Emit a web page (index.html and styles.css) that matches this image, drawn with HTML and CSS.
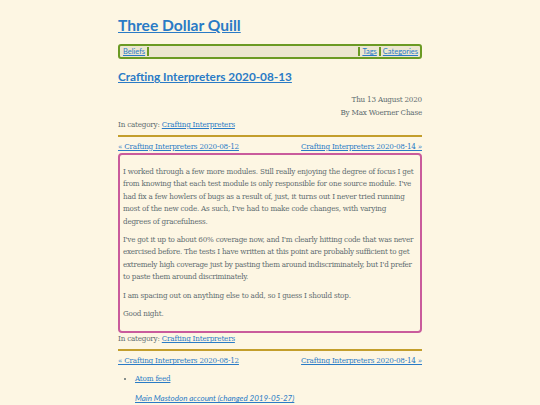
FILE: index.html
```html
<!DOCTYPE html>
<html lang="en">
<head>
<meta charset="utf-8">
<title>Crafting Interpreters 2020-08-13</title>
<link rel="stylesheet" href="styles.css">
</head>
<body>
<div class="page">
  <header class="site-header">
    <h1 class="site-title"><a href="#">Three Dollar Quill</a></h1>
    <nav class="site-nav">
      <a href="#">Beliefs</a>
      <span class="nav-sep"></span>
      <span class="nav-fill"></span>
      <span class="nav-sep"></span>
      <a href="#">Tags</a>
      <span class="nav-sep"></span>
      <a href="#">Categories</a>
    </nav>
  </header>

  <h2 class="post-title"><a href="#">Crafting Interpreters 2020-08-13</a></h2>
  <div class="post-meta">
    <div>Thu 13 August 2020</div>
    <div>By Max Woerner Chase</div>
  </div>
  <div class="category">In category: <a href="#">Crafting Interpreters</a></div>
  <hr class="rule">
  <div class="pager">
    <a href="#">« Crafting Interpreters 2020-08-12</a>
    <a href="#">Crafting Interpreters 2020-08-14 »</a>
  </div>

  <article class="post-body">
    <p>I worked through a few more modules. Still really enjoying the degree of focus I get from knowing that each test module is only responsible for one source module. I've had fix a few howlers of bugs as a result of, just, it turns out I never tried running most of the new code. As such, I've had to make code changes, with varying degrees of gracefulness.</p>
    <p class="tight">I've got it up to about 60% coverage now, and I'm clearly hitting code that was never exercised before. The tests I have written at this point are probably sufficient to get extremely high coverage just by pasting them around indiscriminately, but I'd prefer to paste them around discriminately.</p>
    <p>I am spacing out on anything else to add, so I guess I should stop.</p>
    <p>Good night.</p>
  </article>

  <div class="category">In category: <a href="#">Crafting Interpreters</a></div>
  <hr class="rule">
  <div class="pager">
    <a href="#">« Crafting Interpreters 2020-08-12</a>
    <a href="#">Crafting Interpreters 2020-08-14 »</a>
  </div>

  <footer class="site-footer">
    <ul class="feeds">
      <li><a href="#">Atom feed</a></li>
    </ul>
    <p class="mastodon"><a href="#">Main Mastodon account (changed 2019-05-27)</a></p>
  </footer>
</div>
</body>
</html>
```
FILE: styles.css
```css
html, body {
  margin: 0;
  padding: 0;
  background: #fdf6e3;
}
body {
  font-family: "DejaVu Serif Condensed", "DejaVu Serif", serif;
  font-size: 8px;
  line-height: 12.4px;
  letter-spacing: -0.2px;
  color: #5e6c70;
}
a {
  color: #2a7bc6;
}
.page {
  width: 304px;
  margin: 0 auto;
  padding-top: 14px;
}
.site-title {
  margin: 0;
  font-family: Lato, sans-serif;
  font-weight: 700;
  font-size: 15.6px;
  line-height: 22px;
  letter-spacing: 0;
}
.site-nav {
  margin-top: 8px;
  display: flex;
  align-items: stretch;
  height: 11px;
  border: 2px solid #6b9a24;
  border-radius: 3px;
  background: #ece6d0;
  padding: 0 1px 0 2px;
  font-family: Lato, sans-serif;
  font-size: 7.5px;
  line-height: 11px;
  letter-spacing: 0;
}
.site-nav a {
  padding: 0 1px;
}
.nav-sep {
  width: 2px;
  background: #6b9a24;
  margin: 1px 1px;
}
.nav-fill {
  flex: 1;
}
.post-title {
  margin: 9px 0 0;
  font-family: Lato, sans-serif;
  font-weight: 700;
  font-size: 11.8px;
  line-height: 18px;
  letter-spacing: 0;
}
.post-meta {
  margin-top: 7px;
  text-align: right;
  line-height: 13px;
}
.category {
  line-height: 12px;
}
.rule {
  margin: 4px 0 0;
  border: 0;
  height: 2px;
  background: #c39e2c;
}
.pager {
  display: flex;
  justify-content: space-between;
  margin-top: 4px;
  line-height: 11px;
}
.post-body {
  margin-top: 1px;
  border: 2px solid #c95b9c;
  border-radius: 4px;
  padding: 5px 5px 5px 3px;
}
.post-body p {
  margin: 6px 0;
}
.post-body p.tight {
  letter-spacing: -0.24px;
}
.site-footer {
  margin-top: 5px;
}
.feeds {
  margin: 0;
  padding-left: 17px;
  line-height: 16px;
}
.mastodon {
  margin: 5px 0 0 17px;
  font-family: Lato, sans-serif;
  font-style: italic;
  letter-spacing: 0;
}
```
